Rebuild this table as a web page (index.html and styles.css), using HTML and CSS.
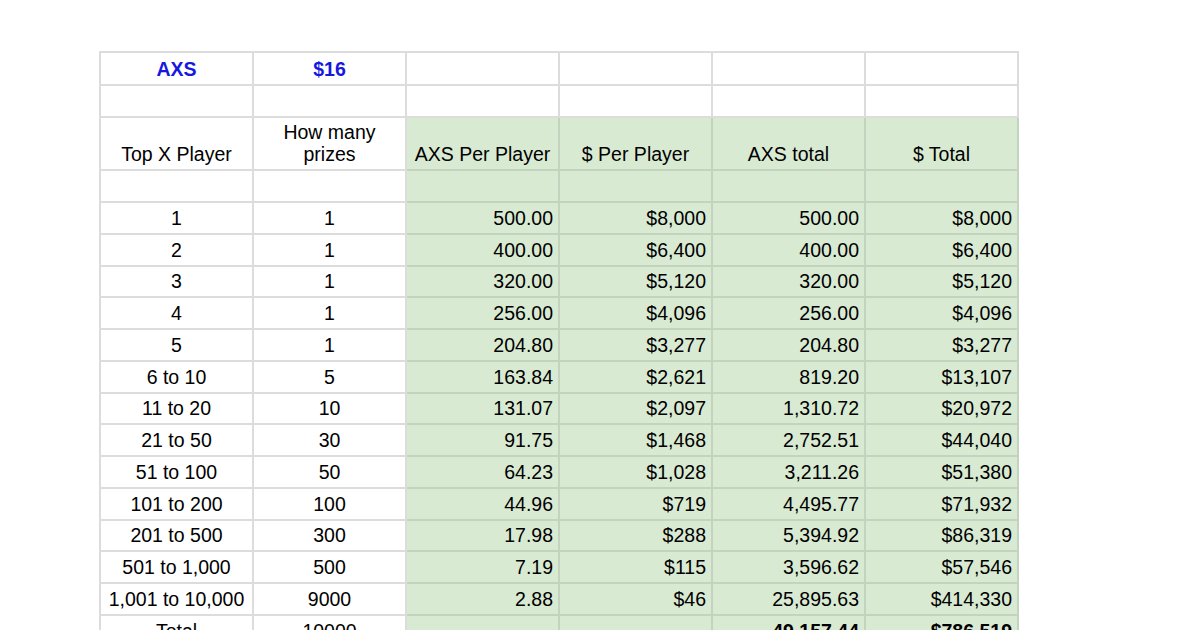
FILE: index.html
```html
<!DOCTYPE html>
<html>
<head>
<meta charset="utf-8">
<link rel="stylesheet" href="styles.css">
</head>
<body>
<div class="page">
  <div class="sheet">
    <div class="c ctr blue">AXS</div><div class="c ctr blue">$16</div><div class="c"></div><div class="c"></div><div class="c"></div><div class="c"></div>
    <div class="c"></div><div class="c"></div><div class="c"></div><div class="c"></div><div class="c"></div><div class="c"></div>
    <div class="c ctr">Top X Player</div><div class="c ctr">How many<br>prizes</div><div class="c ctr g">AXS Per Player</div><div class="c ctr g">$ Per Player</div><div class="c ctr g">AXS total</div><div class="c ctr g">$ Total</div>
    <div class="c"></div><div class="c"></div><div class="c g"></div><div class="c g"></div><div class="c g"></div><div class="c g"></div>

    <div class="c ctr">1</div><div class="c ctr">1</div><div class="c g">500.00</div><div class="c g">$8,000</div><div class="c g">500.00</div><div class="c g">$8,000</div>
    <div class="c ctr">2</div><div class="c ctr">1</div><div class="c g">400.00</div><div class="c g">$6,400</div><div class="c g">400.00</div><div class="c g">$6,400</div>
    <div class="c ctr">3</div><div class="c ctr">1</div><div class="c g">320.00</div><div class="c g">$5,120</div><div class="c g">320.00</div><div class="c g">$5,120</div>
    <div class="c ctr">4</div><div class="c ctr">1</div><div class="c g">256.00</div><div class="c g">$4,096</div><div class="c g">256.00</div><div class="c g">$4,096</div>
    <div class="c ctr">5</div><div class="c ctr">1</div><div class="c g">204.80</div><div class="c g">$3,277</div><div class="c g">204.80</div><div class="c g">$3,277</div>
    <div class="c ctr">6 to 10</div><div class="c ctr">5</div><div class="c g">163.84</div><div class="c g">$2,621</div><div class="c g">819.20</div><div class="c g">$13,107</div>
    <div class="c ctr">11 to 20</div><div class="c ctr">10</div><div class="c g">131.07</div><div class="c g">$2,097</div><div class="c g">1,310.72</div><div class="c g">$20,972</div>
    <div class="c ctr">21 to 50</div><div class="c ctr">30</div><div class="c g">91.75</div><div class="c g">$1,468</div><div class="c g">2,752.51</div><div class="c g">$44,040</div>
    <div class="c ctr">51 to 100</div><div class="c ctr">50</div><div class="c g">64.23</div><div class="c g">$1,028</div><div class="c g">3,211.26</div><div class="c g">$51,380</div>
    <div class="c ctr">101 to 200</div><div class="c ctr">100</div><div class="c g">44.96</div><div class="c g">$719</div><div class="c g">4,495.77</div><div class="c g">$71,932</div>
    <div class="c ctr">201 to 500</div><div class="c ctr">300</div><div class="c g">17.98</div><div class="c g">$288</div><div class="c g">5,394.92</div><div class="c g">$86,319</div>
    <div class="c ctr">501 to 1,000</div><div class="c ctr">500</div><div class="c g">7.19</div><div class="c g">$115</div><div class="c g">3,596.62</div><div class="c g">$57,546</div>
    <div class="c ctr">1,001 to 10,000</div><div class="c ctr">9000</div><div class="c g">2.88</div><div class="c g">$46</div><div class="c g">25,895.63</div><div class="c g">$414,330</div>
    <div class="c ctr">Total</div><div class="c ctr">10000</div><div class="c g"></div><div class="c g"></div><div class="c g b">49,157.44</div><div class="c g b">$786,519</div>
  </div>
</div>
</body>
</html>
```

FILE: styles.css
```css
html, body {
  margin: 0;
  padding: 0;
  background: #ffffff;
}
.page {
  width: 1200px;
  height: 630px;
  overflow: hidden;
  padding: 51px 0 0 99px;
  box-sizing: border-box;
}
.sheet {
  display: grid;
  grid-template-columns: repeat(6, 153px);
  grid-template-rows: 33px 32px 53px 32px repeat(14, 31.75px);
  width: max-content;
  border-top: 2px solid #dcdcdc;
  border-left: 2px solid #dcdcdc;
  font-family: "Liberation Sans", Arial, sans-serif;
  font-size: 19.5px;
  color: #000;
}
.c {
  box-sizing: border-box;
  border-right: 2px solid #dcdcdc;
  border-bottom: 2px solid #dcdcdc;
  display: flex;
  align-items: flex-end;
  justify-content: flex-end;
  padding: 0 5px 4px 5px;
  line-height: 22px;
  white-space: nowrap;
}
.ctr {
  justify-content: center;
  text-align: center;
}
.g {
  background: #d9ead3;
  border-right-color: #c4d3bf;
  border-bottom-color: #c4d3bf;
}
.blue {
  color: #1717e0;
  font-weight: bold;
}
.b {
  font-weight: bold;
}
```
